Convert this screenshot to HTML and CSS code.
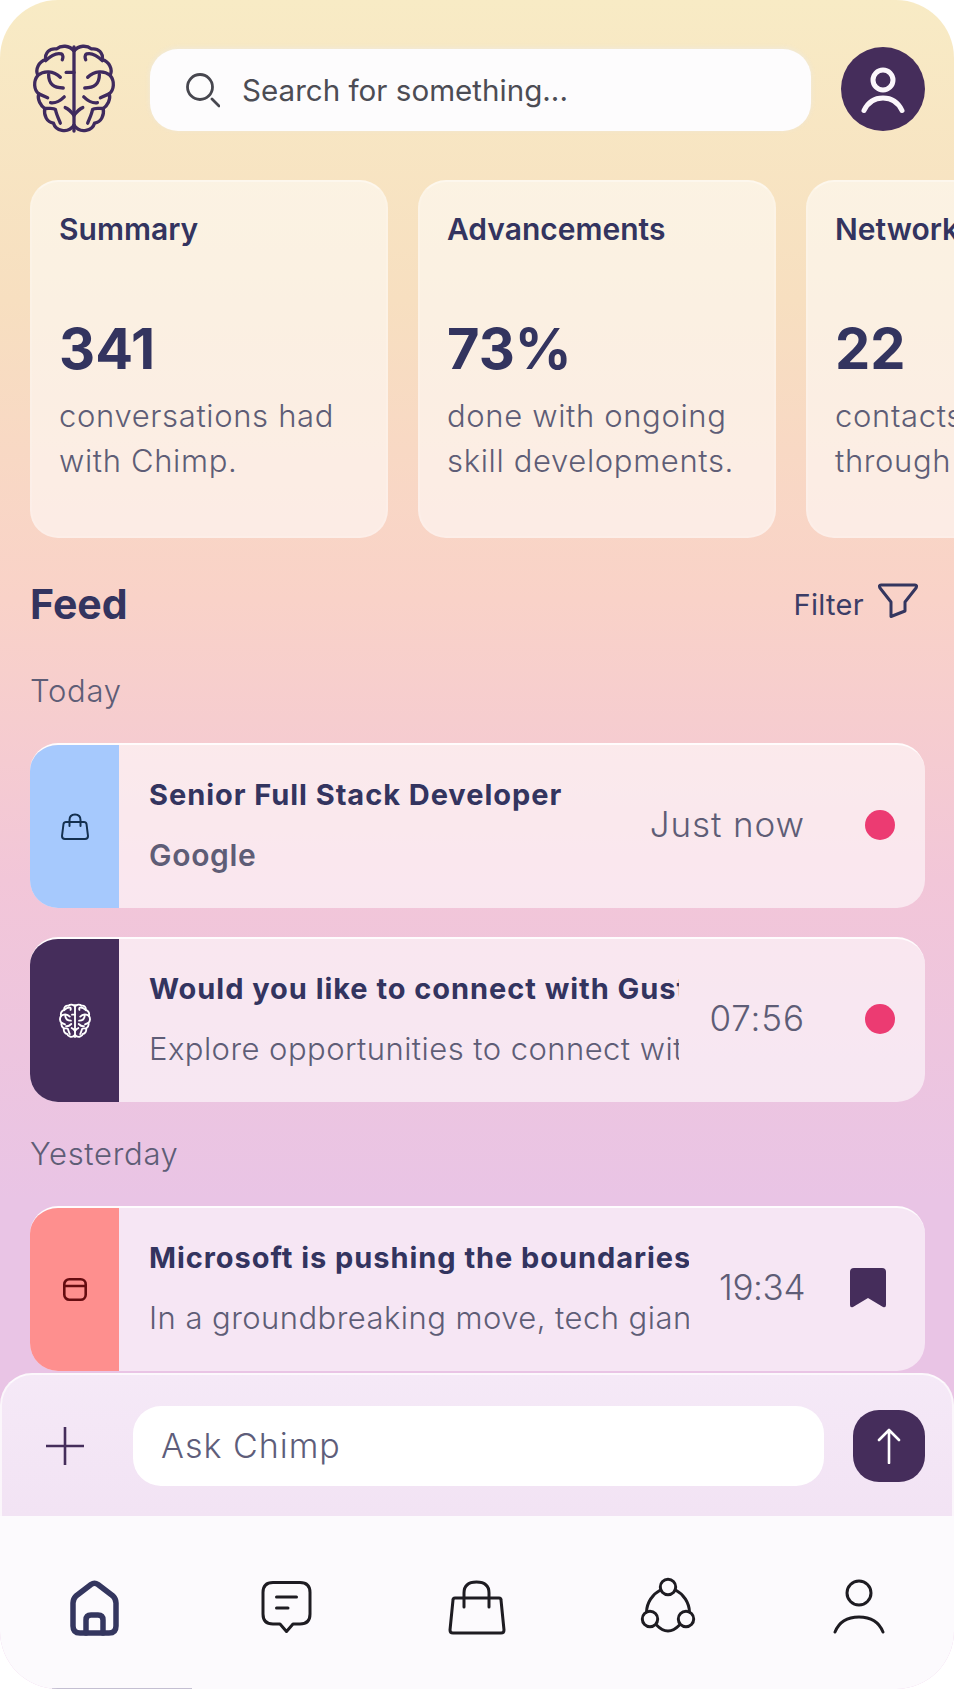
FILE: index.html
```html
<!DOCTYPE html>
<html lang="en">
<head>
    <meta charset="UTF-8">
    <meta name="viewport" content="width=device-width, initial-scale=1.0">
    <title>Chimp</title>
    <link rel="stylesheet" href="styles.css">
</head>
<body>
    <svg class="defs" width="0" height="0">
        <symbol id="brain" viewBox="-2 -2 86 94">
            <path d="M41 2V88"/>
            <path d="M33 28H41"/>
            <g id="lobe">
                <path d="M41 6C36 0 28 0 23 4C16 3 11 8 12 15C5 17 1 25 4 31C-1 37 0 46 5 50C3 56 7 62 11 65C10 72 13 79 20 80C22 87 34 92 41 82"/>
                <path d="M12 16C18 10 24 8 28 9C30 10 30 13 29 15"/>
                <path d="M15 30C15 40 20 44 30 44"/>
                <path d="M4 31C10 26 20 26 27 33"/>
                <path d="M5 50L14 54"/>
                <path d="M17 59C22 60 28 56 31 53"/>
                <path d="M11 65C16 65 20 64 22 66C23 71 25 75 27 80"/>
                <path d="M32 64C35 65 38 68 41 72"/>
            </g>
            <use href="#lobe" transform="matrix(-1 0 0 1 82 0)"/>
        </symbol>
    </svg>

    <div class="screen">
        <div class="main">
            <div class="top-bar">
                <svg class="logo" width="84" height="92"><use href="#brain"/></svg>
                <div class="search">
                    <svg class="search-icon" width="36" height="36" viewBox="0 0 36 36">
                        <circle cx="16" cy="15" r="12.5"/>
                        <path d="M28 27L35 34"/>
                    </svg>
                    <span>Search for something...</span>
                </div>
                <div class="avatar">
                    <svg width="84" height="84" viewBox="0 0 84 84">
                        <circle cx="42" cy="33" r="10"/>
                        <path d="M23 63.500C27 55 34 51 42 51C50 51 57 55 61 63.500"/>
                    </svg>
                </div>
            </div>

            <div class="stats">
                <div class="stat-card">
                    <div class="stat-title">Summary</div>
                    <div class="stat-value">341</div>
                    <div class="stat-text">conversations had<br>with Chimp.</div>
                </div>
                <div class="stat-card">
                    <div class="stat-title">Advancements</div>
                    <div class="stat-value">73%</div>
                    <div class="stat-text">done with ongoing<br>skill developments.</div>
                </div>
                <div class="stat-card">
                    <div class="stat-title">Network</div>
                    <div class="stat-value">22</div>
                    <div class="stat-text">contacts reached<br>through Chimp.</div>
                </div>
            </div>

            <div class="feed">
                <div class="feed-head">
                    <h2>Feed</h2>
                    <div class="filter">
                        <span>Filter</span>
                        <svg width="40" height="36" viewBox="0 0 40 36">
                            <path d="M3 2H37Q39.500 2 38 5L27 19V28L13 33.500V19L2 5Q.5 2 3 2Z"/>
                        </svg>
                    </div>
                </div>

                <div class="day">Today</div>
                <div class="feed-item">
                    <div class="stripe stripe-blue">
                        <svg width="28" height="27" viewBox="0 0 28 27">
                            <path d="M5 9H23Q25 9 25.500 11L27 23Q27 26 24 26H4Q1 26 1 23L2.500 11Q3 9 5 9Z"/>
                            <path d="M8.500 13V7Q8.500 1.500 14 1.500Q19.500 1.500 19.500 7V13"/>
                        </svg>
                    </div>
                    <div class="item-text">
                        <div class="item-title">Senior Full Stack Developer</div>
                        <div class="item-sub item-sub-bold">Google</div>
                    </div>
                    <div class="item-time">Just now</div>
                    <div class="item-mark"><span class="dot"></span></div>
                </div>
                <div class="feed-item">
                    <div class="stripe stripe-purple">
                        <svg class="small-brain" width="32" height="36"><use href="#brain"/></svg>
                    </div>
                    <div class="item-text">
                        <div class="item-title">Would you like to connect with Gustav Lindqvist?</div>
                        <div class="item-sub">Explore opportunities to connect with people in your field</div>
                    </div>
                    <div class="item-time">07:56</div>
                    <div class="item-mark"><span class="dot"></span></div>
                </div>

                <div class="day day-second">Yesterday</div>
                <div class="feed-item">
                    <div class="stripe stripe-red">
                        <svg width="24" height="23" viewBox="0 0 24 23">
                            <rect x="1.300" y="1.300" width="21.400" height="20.400" rx="5"/>
                            <path d="M1.300 8H22.700"/>
                        </svg>
                    </div>
                    <div class="item-text">
                        <div class="item-title">Microsoft is pushing the boundaries of AI research</div>
                        <div class="item-sub">In a groundbreaking move, tech giant Microsoft has announced</div>
                    </div>
                    <div class="item-time item-time-tight">19:34</div>
                    <div class="item-mark">
                        <svg class="bookmark" width="36" height="40" viewBox="0 0 36 40">
                            <path d="M4 0H32Q36 0 36 4V37Q36 40 33 39L18 30L3 39Q0 40 0 37V4Q0 0 4 0Z"/>
                        </svg>
                    </div>
                </div>
            </div>
        </div>

        <div class="composer">
            <svg class="plus" width="38" height="38" viewBox="0 0 38 38">
                <path d="M19 0V38M0 19H38"/>
            </svg>
            <div class="ask">Ask Chimp</div>
            <div class="send">
                <svg width="24" height="36" viewBox="0 0 24 36">
                    <path d="M12 35V2M2 12L12 2L22 12"/>
                </svg>
            </div>
        </div>

        <div class="tabs">
            <div class="tab">
                <svg class="tab-active" width="60" height="60" viewBox="0 0 60 60">
                    <path d="M8 27Q8 23 11 20L26 8.500Q29.500 6 33 8.500L48 20Q51 23 51 27V50Q51 57 44 57H15Q8 57 8 50Z"/>
                    <path d="M21 57V44Q21 39 26 39H33Q38 39 38 44V57"/>
                </svg>
            </div>
            <div class="tab">
                <svg width="60" height="60" viewBox="0 0 60 60">
                    <path d="M17 6.500H44Q54 6.500 54 16.500V38Q54 48 44 48H37L30.500 55.500L24 48H17Q7 48 7 38V16.500Q7 6.500 17 6.500Z"/>
                    <path d="M20.500 21H40.500M20.500 32H32"/>
                </svg>
            </div>
            <div class="tab">
                <svg width="60" height="60" viewBox="0 0 60 60">
                    <path d="M8 22H52Q54 22 54 24L57 54Q57 57 54 57H6Q3 57 3 54L6 24Q6 22 8 22Z"/>
                    <path d="M17 31V17Q17 6 29.500 6Q42 6 42 17V31"/>
                </svg>
            </div>
            <div class="tab">
                <svg width="60" height="60" viewBox="0 0 60 60">
                    <circle cx="30" cy="11" r="7.700"/>
                    <circle cx="12" cy="43" r="7.700"/>
                    <circle cx="48" cy="43" r="7.700"/>
                    <path d="M22.500 14A26 26 0 0 0 8.500 36M37.500 14A26 26 0 0 1 51.500 36M18.500 49Q30 61 41.500 49"/>
                </svg>
            </div>
            <div class="tab">
                <svg width="60" height="60" viewBox="0 0 60 60">
                    <circle cx="30" cy="17" r="12"/>
                    <path d="M6 56Q12 41 30 41Q48 41 54 56"/>
                </svg>
            </div>
        </div>
    </div>
</body>
</html>
```

FILE: styles.css
```css
* {
    margin: 0;
    padding: 0;
    box-sizing: border-box;
}

body {
    background: #fff;
    font-family: Inter, "Liberation Sans", sans-serif;
    overflow: hidden;
}

svg {
    display: block;
    flex: none;
    fill: none;
    stroke-linecap: round;
    stroke-linejoin: round;
}

.defs {
    position: absolute;
}

.screen {
    display: flex;
    flex-direction: column;
    width: 954px;
    height: 1689px;
    border-radius: 58px;
    overflow: hidden;
    background: linear-gradient(180deg, #f8ebc5 0, #f7dfc0 300px, #f9d2c8 600px, #f2c6d8 880px, #e9c4e5 1200px);
}

.main {
    flex: 1;
    min-height: 0;
    overflow: hidden;
}

/* top bar */
.top-bar {
    display: flex;
    align-items: center;
    padding: 43px 29px 0 32px;
}

.logo {
    stroke: #3f2a5e;
    stroke-width: 3.4;
}

.search {
    flex: 1;
    display: flex;
    align-items: center;
    gap: 22px;
    height: 82px;
    margin: 2px 30px 0 34px;
    padding-left: 34px;
    background: #fdfcfd;
    border-radius: 28px;
    box-shadow: 0 -1px 5px rgba(235, 235, 235, 0.6);
    color: #4c4c54;
    font-size: 29.600px;
}

.search-icon {
    stroke: #47474f;
    stroke-width: 2.8;
}

.avatar {
    width: 84px;
    height: 84px;
    border-radius: 50%;
    background: #452d5b;
}

.avatar svg {
    stroke: #fbf6fb;
    stroke-width: 5;
}

/* stat cards */
.stats {
    display: flex;
    gap: 30px;
    margin-top: 45px;
    padding-left: 30px;
    overflow: hidden;
}

.stat-card {
    flex: none;
    width: 358px;
    height: 358px;
    padding: 29px 0 0 27px;
    background: rgba(255, 255, 255, 0.54);
    border: 2px solid rgba(255, 255, 255, 0.12);
    border-top-color: rgba(255, 255, 255, 0.35);
    border-radius: 28px;
}

.stat-title {
    color: #33345f;
    font-size: 30px;
    font-weight: 600;
    line-height: 36px;
}

.stat-value {
    margin-top: 67px;
    color: #33345f;
    font-size: 56px;
    font-weight: 700;
    line-height: 70px;
}

.stat-text {
    margin-top: 9px;
    color: #5e5d76;
    font-size: 31px;
    font-weight: 300;
    letter-spacing: 0.65px;
    line-height: 45px;
    white-space: nowrap;
}

/* feed */
.feed {
    padding: 0 29px 0 30px;
}

.feed-head {
    display: flex;
    justify-content: space-between;
    align-items: center;
    height: 46px;
    margin-top: 43px;
}

.feed-head h2 {
    color: #33345f;
    font-size: 41px;
    font-weight: 700;
}

.filter {
    display: flex;
    align-items: center;
    gap: 14px;
    margin-right: 7px;
    color: #3c3d66;
    font-size: 29px;
    letter-spacing: 0.3px;
}

.filter svg {
    margin-bottom: 7px;
    stroke: #34365f;
    stroke-width: 3;
}

.day {
    margin-top: 46px;
    color: #5e5d76;
    font-size: 31px;
    font-weight: 300;
    letter-spacing: 0.7px;
    line-height: 36px;
}

.day-second {
    margin-top: 34px;
}

.day + .feed-item {
    margin-top: 34px;
}

.feed-item {
    display: flex;
    align-items: center;
    height: 165px;
    margin-top: 29px;
    padding-bottom: 3px;
    background: rgba(255, 255, 255, 0.58);
    border-top: 2px solid rgba(255, 255, 255, 0.85);
    border-radius: 28px;
    overflow: hidden;
}

.stripe {
    flex: none;
    align-self: stretch;
    display: flex;
    align-items: center;
    justify-content: center;
    width: 89px;
    margin-bottom: -3px;
}

.stripe-blue {
    background: #a6c9fd;
    stroke: #14304f;
    stroke-width: 2;
}

.stripe-purple {
    background: #452d5b;
}

.small-brain {
    stroke: #fff;
    stroke-width: 5;
}

.stripe-red {
    background: #fe8f8e;
    stroke: #650c10;
    stroke-width: 2.600;
}

.item-text {
    flex: 1;
    min-width: 0;
    margin-left: 30px;
    overflow: hidden;
    white-space: nowrap;
}

.item-title {
    color: #33345f;
    font-size: 29px;
    font-weight: 700;
    letter-spacing: 0.95px;
    line-height: 40px;
}

.item-sub {
    margin-top: 20px;
    color: #5e5d76;
    font-size: 31px;
    font-weight: 300;
    letter-spacing: 0.45px;
    line-height: 40px;
}

.item-sub-bold {
    font-size: 30px;
    font-weight: 600;
    letter-spacing: 0.7px;
}

.item-time {
    flex: none;
    margin: 0 0 3px 30px;
    color: #5e5d76;
    font-size: 35px;
    font-weight: 300;
    letter-spacing: 0.9px;
}

.item-time-tight {
    letter-spacing: -0.4px;
}

.item-mark {
    flex: none;
    display: flex;
    justify-content: flex-end;
    width: 90px;
    margin-right: 30px;
}

.dot {
    width: 30px;
    height: 30px;
    border-radius: 50%;
    background: #ec3b72;
}

.bookmark {
    margin-right: 9px;
    fill: #452d5b;
}

/* ask bar */
.composer {
    flex: none;
    display: flex;
    align-items: center;
    height: 143px;
    padding: 0 27px 0 44px;
    background: linear-gradient(180deg, #f5e9f7, #f2e3f4);
    border: 2px solid #fbf6fb;
    border-top-color: rgba(255, 255, 255, 0.75);
    border-bottom: 0;
    border-radius: 32px 32px 0 0;
}

.plus {
    stroke: #452d5b;
    stroke-width: 2.600;
}

.ask {
    flex: 1;
    display: flex;
    align-items: center;
    height: 80px;
    margin: 0 29px 0 49px;
    padding-left: 28px;
    background: #fff;
    border-radius: 28px;
    color: #5e5d7a;
    font-size: 34px;
    font-weight: 300;
    letter-spacing: 1px;
}

.send {
    flex: none;
    display: flex;
    align-items: center;
    justify-content: center;
    width: 72px;
    height: 72px;
    background: #452d5b;
    border-radius: 26px;
}

.send svg {
    stroke: #fff;
    stroke-width: 2.600;
}

/* bottom tabs */
.tabs {
    flex: none;
    position: relative;
    display: grid;
    grid-template-columns: repeat(5, 1fr);
    height: 173px;
    padding-top: 60px;
    background: #fcfafd;
}

.tabs::after {
    content: "";
    position: absolute;
    left: 52px;
    bottom: 0;
    width: 140px;
    height: 1px;
    background: #c4bfd2;
}

.tab {
    display: flex;
    justify-content: center;
}

.tab svg {
    stroke: #1e1c22;
    stroke-width: 3;
}

.tab svg.tab-active {
    stroke: #34365f;
    stroke-width: 5.500;
}
```
